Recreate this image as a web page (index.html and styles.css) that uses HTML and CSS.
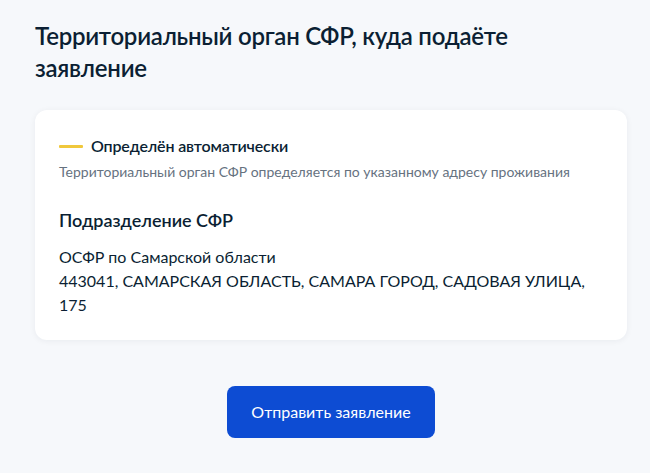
FILE: index.html
```html
<!DOCTYPE html>
<html lang="ru">
<head>
<meta charset="utf-8">
<title>Территориальный орган СФР</title>
<link rel="stylesheet" href="styles.css">
</head>
<body>
<main class="page">
  <h1 class="title">Территориальный орган СФР, куда подаёте заявление</h1>
  <section class="card">
    <div class="status">
      <span class="status-mark"></span>
      <span class="status-text">Определён автоматически</span>
    </div>
    <p class="hint">Территориальный орган СФР определяется по указанному адресу проживания</p>
    <h2 class="subtitle">Подразделение СФР</h2>
    <p class="body">ОСФР по Самарской области<br>443041, САМАРСКАЯ ОБЛАСТЬ, САМАРА ГОРОД, САДОВАЯ УЛИЦА, 175</p>
  </section>
  <div class="actions">
    <button class="btn" type="button">Отправить заявление</button>
  </div>
</main>
</body>
</html>
```
FILE: styles.css
```css
* { box-sizing: border-box; }
html, body { margin: 0; padding: 0; }
body {
  background: #f6f8fb;
  font-family: Lato, "Noto Sans", sans-serif;
  color: #0b1f33;
}
.page {
  width: 592px;
  margin-left: 35px;
  padding-top: 20px;
}
.title {
  margin: 0 0 26px;
  font-size: 24px;
  line-height: 32px;
  font-weight: 600;
  letter-spacing: -0.25px;
  width: 520px;
}
.card {
  background: #fff;
  border-radius: 12px;
  padding: 24px 24px 23px;
  box-shadow: 0 1px 6px rgba(11, 31, 51, 0.06);
}
.status {
  display: flex;
  align-items: center;
  gap: 8px;
  height: 24px;
}
.status-mark {
  width: 24px;
  height: 3px;
  background: #f0c83c;
  border-radius: 1px;
}
.status-text {
  font-size: 16px;
  line-height: 24px;
  font-weight: 600;
  letter-spacing: -0.15px;
}
.hint {
  margin: 4px 0 0;
  font-size: 14px;
  line-height: 20px;
  color: #66727f;
}
.subtitle {
  margin: 24px 0 0;
  font-size: 18px;
  line-height: 28px;
  font-weight: 600;
}
.body {
  margin: 11px 0 0;
  font-size: 16px;
  line-height: 24px;
  width: 540px;
}
.actions {
  display: flex;
  justify-content: center;
  margin-top: 46px;
}
.btn {
  height: 52px;
  width: 208px;
  border: 0;
  border-radius: 8px;
  background: #0d4cd3;
  color: #fff;
  font-family: Lato, "Noto Sans", sans-serif;
  font-size: 16px;
  line-height: 24px;
  cursor: pointer;
}
```
